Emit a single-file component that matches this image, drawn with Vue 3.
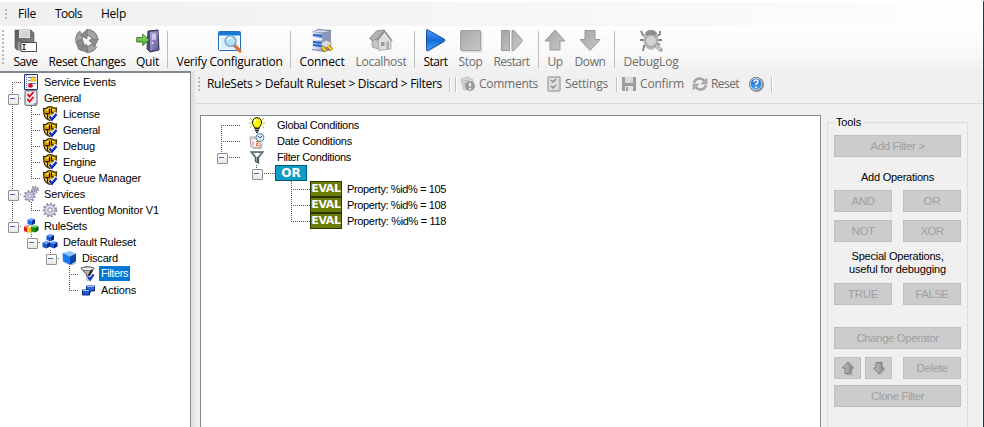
<script setup>
// Spreads a label's letters so that it fills the given width in pixels.
const vFit = {
  mounted(el, { value }) {
    if (!value) return
    const n = el.textContent.length
    const w = el.getBoundingClientRect().width
    el.style.letterSpacing = ((value - w) / n).toFixed(3) + 'px'
  },
}

const shield = '<path d="M1.500 2.500Q4 3 6 1q2-1 4 0 2 1.500 4.500 1l-.5 6.500q-1 4-6 6-5-2-6-6z" fill="#d39c0c" stroke="#33260a" stroke-width="1.100"/><path d="M4 4q2 0 3-1M10 3q1 1 2.500 1M4 9l1 2.500" fill="none" stroke="#ffdc62" stroke-width="1.500"/><path d="M3 7.500h4.500M7.500 3v4.500M9.500 2.500v4l3 1M5.500 8v4" fill="none" stroke="#1d1604" stroke-width="1.100"/><path d="M7.500 10l2.500 3 4.500-6" fill="none" stroke="#fff" stroke-width="4"/><path d="M7.500 10.500l2.500 3 4.500-5.500" fill="none" stroke="#0b2fb8" stroke-width="2.500"/>'
const cube = (x, y, a, b, c) => `<g transform="translate(${x} ${y})"><path d="M0 1.500L3.500 0 7.500 1 4 3z" fill="${a}"/><path d="M0 1.500l4 1.500v4.500L0 6z" fill="${b}"/><path d="M4 3l3.500-2v4.500L4 7.500z" fill="${c}"/></g>`
const teeth = (cx, cy, r, n) => `<circle cx="${cx}" cy="${cy}" r="${r}" fill="none" stroke="#8083a0" stroke-width="2" stroke-dasharray="${(Math.PI * r / n).toFixed(2)}"/><circle cx="${cx}" cy="${cy}" r="${r - 1}" fill="#d4d5e6" stroke="#8588a4" stroke-width=".8"/><circle cx="${cx}" cy="${cy}" r="${r / 3}" fill="#fff" stroke="#777a96" stroke-width=".8"/>`

const icons = {
  save: '<path d="M1 1h16l3 3v17H3l-2-2z" fill="url(#dark)" stroke="#555" stroke-width=".6"/><path d="M5 1h11v8H5z" fill="#e5e5e5"/><path d="M6 3h9M6 5h9M6 7h9" stroke="#c2c2c2"/><path d="M4 13h12v8H4z" fill="#999"/><path d="M7 13.500h15.500v9H7z" fill="#fff" stroke="#4b4b4b"/><path d="M8.500 15.500h3M8.500 20.500h3M10 15.500v5" stroke="#111"/>',
  recycle: '<g fill="none" stroke="#6d6d6d" stroke-width="7"><path d="M3.600 11A8.500 8.500 0 0 1 7 4.600"/><path d="M11.500 3.500a8.500 8.500 0 0 1 8.500 6.500"/><path d="M19 16.500a8.500 8.500 0 0 1-7 4"/></g><g fill="none" stroke="#a3a3a3" stroke-width="5.400"><path d="M3.700 11.500A8.500 8.500 0 0 1 7 4.600"/><path d="M11 3.500a8.500 8.500 0 0 1 9 7"/><path d="M19.500 16a8.500 8.500 0 0 1-8 4.500"/></g><path d="M12 1v9L5.500 6zM23.500 10l-4 7.500-5.500-6.500zM13 23.500l-8-2.500 6.500-6zM.5 12l7-1.500 2 6-5.500 4.500z" fill="#8c8c8c" stroke="#686868" stroke-width=".7"/>',
  quit: '<path d="M12 2l10-1 1 20-9 2-3-3z" fill="#4c4a70" stroke="#39385a"/><path d="M14 3l8-1v18l-8 2z" fill="url(#door)"/><path d="M16 5l4-.500v6l-4 .5z" fill="#c9c8ea"/><circle cx="16.500" cy="14" r="1" fill="#eee"/><path d="M.7 8.500h6V5l6.500 6-6.500 5.500v-3.500h-6z" fill="url(#green)" stroke="#397c22" stroke-width=".9"/>',
  verify: '<rect x=".5" y="2.500" width="22" height="19" rx="1" fill="#f4faff" stroke="#1e6ec0"/><path d="M1 3h21v3.500H1z" fill="#1779d8"/><path d="M3 8.500h17v11H3z" fill="#d9edfa"/><path d="M16 16l6 6" stroke="#d8743a" stroke-width="3.200" stroke-linecap="round"/><circle cx="12.500" cy="12" r="5.300" fill="#b9dff8" stroke="#77a3cc" stroke-width="1.500"/><path d="M9.500 11q1-2.500 4-2.500" stroke="#fff" stroke-width="1.500" fill="none"/>',
  connect: '<path d="M2 3l6-3 13 1v20l-7 2-12-2z" fill="#737f9c"/><path d="M2 3l11 1v18L2 20z" fill="url(#server)"/><path d="M13 4l8-2v18l-8 2z" fill="#8a97b6"/><path d="M3 3l5-2 12 1-7 1.500z" fill="#d6deef"/><path d="M3 6l9 1M3 13l9 1M3 16l9 1" stroke="#1d5ed0" stroke-width="1.800"/><path d="M3 9.500l9 1" stroke="#fff" stroke-width="1.500"/><path d="M11 14l5-3 5 2v4l-5 2-4-2z" fill="#d9d9dc" stroke="#777" stroke-width=".6"/><path d="M12 18l4 4M18 17l4 4" stroke="#8d6900" stroke-width="3.800"/><path d="M12 18l4 4M18 17l4 4" stroke="#ffd22e" stroke-width="2.400"/>',
  house: '<path d="M3 10l4-5 5 5v11l-9-3z" fill="#c4c4c4" stroke="#999" stroke-width=".7"/><path d="M.5 9.500L7.500 2l8-1-7 8.500-5 2z" fill="#b2b2b2" stroke="#8b8b8b"/><path d="M9 11l7-8.500 6 9v8.500l-12 1.500z" fill="#dedede" stroke="#999" stroke-width=".7"/><path d="M8 11.500L15.500 2l7.500 10" fill="none" stroke="#929292" stroke-width="1.500"/><path d="M12 13h3.500v4H12z" fill="#999"/><path d="M17.500 12.500H20V20h-2.500z" fill="#aaa"/>',
  start: '<path d="M4 3l17 9.500L4 23z" fill="#777" opacity=".45"/><path d="M2.500 1.500Q2.500 0 4 1l16 9q2 1 0 2.500l-16 9q-1.500 1-1.500-1z" fill="url(#blue)" stroke="#1553ac"/>',
  stop: '<rect x="2.500" y="2.500" width="21" height="21" rx="1" fill="#ddd"/><rect x="1.500" y="1.500" width="20" height="20" rx="1" fill="url(#grey)" stroke="#a0a0a0"/>',
  restart: '<path d="M1.500 1.500h8v20h-8zM12 1.500h2l8 9v2l-8 9h-2z" fill="url(#grey)" stroke="#999" stroke-linejoin="round"/>',
  up: '<path d="M12 1L22 12h-5v9H7v-9H2z" fill="url(#grey)" stroke="#999" stroke-linejoin="round"/>',
  down: '<path d="M12 21.500L22 10.500h-5v-9H7v9H2z" fill="url(#grey)" stroke="#999" stroke-linejoin="round"/>',
  bug: '<path d="M2 2l2 4 4 2M21 2v3l-4 3M1 11h7M23 11h-6M4 22l1-5 4-3M21 16l-5-3" stroke="#808080" stroke-width="1.800" fill="none"/><ellipse cx="12" cy="11" rx="7.500" ry="10" fill="#b8b8b8"/><path d="M6 5q1-4 6-4t6 4l-3 2H9z" fill="#8a8a8a"/><circle cx="12" cy="12" r="5.800" fill="#d2d2d2" stroke="#aaa" stroke-width="1.600"/><path d="M17 17l5 4" stroke="#aaa" stroke-width="3.600" stroke-linecap="round"/><path d="M17 17l4 3.500" stroke="#d6d6d6" stroke-width="1.500"/>',
  events: '<path d="M1.500.5h13v15h-13z" fill="#f7f7ff" stroke="#27357c"/><path d="M3.500 1v14" stroke="#64709b" stroke-dasharray="1 1"/><path d="M5 3.500h8M5 6.500h8M5 9.500h8M5 12.500h8" stroke="#7183bd"/><path d="M7 7l3-5 3.500 5z" fill="#ffd91a" stroke="#c29600" stroke-width=".5"/><circle cx="7.500" cy="11.500" r="2.300" fill="#d4141c"/><path d="M10 11h4v3h-4z" fill="#fff"/>',
  checks: '<rect x="2" y=".7" width="12" height="14.600" rx="1.200" fill="#e9e9ee" stroke="#77777f" stroke-width="1.200"/><path d="M4.500 4l2 2.500L10.500 2M4.500 9l2 2.500L10.500 7" fill="none" stroke="#d9111d" stroke-width="1.800"/><path d="M11 13h3v2h-3z" fill="#9a9aa2"/>',
  shield,
  gears: teeth(6.5, 10, 5, 9) + teeth(12, 3.500, 3, 7),
  gear: teeth(8, 8, 6.3, 11),
  cubes: cube(4.5, 0, '#72a7ff', '#1767f0', '#092b93') + cube(1, 7, '#ff7771', '#df1818', '#a90e0c') + cube(4, 7.5, '#fff27b', '#f1cf13', '#b28c00') + cube(8, 7, '#66d75f', '#139819', '#065c10'),
  cubesBlue: cube(4.5, 0, '#5c98fb', '#1058e0', '#072480') + cube(.5, 7, '#5c98fb', '#1058e0', '#072480') + cube(8, 7, '#5c98fb', '#1058e0', '#072480'),
  cube: '<path d="M1.500 3L9 1l6 2.500-6 3z" fill="#8bc2ff"/><path d="M1.500 3L9 6.500V15L2 11.500z" fill="#187cf2"/><path d="M9 6.500l6-3v8L9 15z" fill="#0748aa"/><path d="M10 15l5-2" stroke="#aaa"/>',
  filters: '<path d="M1 2q6-2.500 13 0l-4 7v5H7V9z" fill="#b9b9b9" stroke="#333"/><ellipse cx="7.500" cy="2.800" rx="6.500" ry="1.800" fill="#eee" stroke="#555" stroke-width=".7"/><path d="M12 4L9 9v2" stroke="#222" stroke-width="2" fill="none"/><path d="M7.500 11l2.500 2.500 3.500-5" stroke="#fff" stroke-width="4" fill="none"/><path d="M8 11l2 2.500 3.500-5" stroke="#183fc0" stroke-width="2.300" fill="none"/>',
  actions: '<path d="M6.500 4h8v5h-8z" fill="#2868e8" stroke="#0b266c"/><path d="M7 4.500h7" stroke="#a3cfff"/><path d="M2.500 8h7v5h-7z" fill="#1959dd" stroke="#0b266c"/><path d="M3 8.500h6" stroke="#a3cfff"/><path d="M9 11l2-1" stroke="#001a54"/>',
  bulb: '<path d="M1 1l2 2M15 1l-2 2M0 6h2M16 6h-2M1 11l2-2M15 11l-2-2" stroke="#c9ba21"/><path d="M8 .6a4.900 4.900 0 0 0-3 8.600l1 2h4l1-2A4.900 4.900 0 0 0 8 .6z" fill="#fff500" stroke="#151500"/><path d="M5.500 4.500q.5-2 2-2" stroke="#fff" stroke-width="1.300" fill="none"/><path d="M5.500 11.500h5M6 13.500h4M7 15.300h2" stroke="#222" stroke-width="1.300"/>',
  date: '<path d="M1 4h10v11l-9-1z" fill="#fafafa" stroke="#979797"/><path d="M1 4h10v2.500H1z" fill="#c8c8cc"/><path d="M4 8.500v4M7 8.500h2v2H7.500v2H10" stroke="#e45c2c" fill="none"/><path d="M4 15h8l1-4" fill="none" stroke="#b7adad" stroke-width="1.500"/><circle cx="11" cy="4.500" r="4" fill="#d6ebf7" stroke="#667f96"/><path d="M9 3l2 2 2-2" stroke="#344d66" fill="none"/>',
  funnel: '<path d="M2 3h12L9.500 8.500V14l-3-1.500v-4z" fill="#c5d1d2" stroke="#4b6064" stroke-width="1.300"/><path d="M5.500 4l2.500 3.500L10.500 4" fill="#fff"/><path d="M8.500 8v5" stroke="#485e62" stroke-width="1.500"/>',
  comments: '<path d="M1 3l7-2 5 3-1 8-8 2z" fill="#dcdcdc" stroke="#b8b8b8"/><path d="M3 5l6-1M4 7.500l5-1M4 10l4-1" stroke="#aaa"/><circle cx="10" cy="10" r="5" fill="#999"/><path d="M10 7v3.500M10 12v1.500" stroke="#fff" stroke-width="1.800"/>',
  settings: '<rect x="2" y="1" width="12" height="14" rx="1" fill="#dedede" stroke="#a8a8a8" stroke-width="1.500"/><path d="M5 4l2 2 3-3M5 10l2 2 3-3" stroke="#888" fill="none" stroke-width="1.300"/>',
  disk: '<path d="M1 1h14v14H2l-1-1z" fill="#9c9c9c"/><path d="M4 1h8v6H4z" fill="#dadada"/><path d="M4 10h8v5H4z" fill="#e5e5e5"/><path d="M5 11h2v4H5z" fill="#999"/>',
  refresh: '<g fill="none" stroke="#a5a5a5" stroke-width="2.600"><path d="M2 7q1-4.500 6-4.500 2.500 0 4.500 2.500"/><path d="M14 9q-1 4.500-6 4.500-2.500 0-4.500-2.500"/></g><path d="M15 2v6H9zM1 14V8h6z" fill="#b0b0b0" stroke="#9b9b9b" stroke-width=".6"/>',
  help: '<circle cx="8.500" cy="8.500" r="7.300" fill="#777"/><circle cx="8" cy="8" r="6.700" fill="#dde4ef" stroke="#888"/><circle cx="8" cy="8" r="5.500" fill="url(#ball)"/><path d="M6 6q0-2 2-2t2 1.700q0 1-2 2.300v1M8 10.500v1.500" fill="none" stroke="#fff" stroke-width="1.500"/>',
  smallUp: '<path d="M13.500 9h-2v6H6.500" stroke="#b5b5b5" stroke-width="1.500" fill="none"/><path d="M8 2l5.500 6h-2.500v5.500H5V8H2.500z" fill="url(#steel)" stroke="#7d7d7d"/>',
  smallDown: '<path d="M14 9l-5 6" stroke="#b5b5b5" stroke-width="1.500" fill="none"/><path d="M8 14l5.500-6h-2.500V2.500H5V8H2.500z" fill="url(#steel)" stroke="#7d7d7d"/>',
}

const menu = [['File', 18], ['Tools', 27], ['Help', 25]]

// label, icon, button width, label width, enabled
const groups = [
  [['Save', 'save', 35, 24, 1], ['Reset Changes', 'recycle', 88, 77, 1], ['Quit', 'quit', 33, 23, 1]],
  [['Verify Configuration', 'verify', 117, 106, 1]],
  [['Connect', 'connect', 56, 45, 1], ['Localhost', 'house', 62, 51, 0]],
  [['Start', 'start', 35, 24, 1], ['Stop', 'stop', 35, 24, 0], ['Restart', 'restart', 47, 36, 0]],
  [['Up', 'up', 26, 15, 0], ['Down', 'down', 44, 31, 0]],
  [['DebugLog', 'bug', 66, 55, 0]],
]

// guides: b blank, v line through, t branch, e last branch, f first branch, m expander box
const nav = [
  [['f'], 'events', 'Service Events', 72],
  [['t m'], 'checks', 'General', 37],
  [['v', 't'], 'shield', 'License', 37],
  [['v', 't'], 'shield', 'General', 37],
  [['v', 't'], 'shield', 'Debug', 32],
  [['v', 't'], 'shield', 'Engine', 33],
  [['v', 'e'], 'shield', 'Queue Manager', 78],
  [['t m'], 'gears', 'Services', 41],
  [['v', 'e'], 'gear', 'Eventlog Monitor V1', 96],
  [['e m'], 'cubes', 'RuleSets', 43],
  [['b', 'e m'], 'cubesBlue', 'Default Ruleset', 73],
  [['b', 'b', 'e m'], 'cube', 'Discard', 36],
  [['b', 'b', 'b', 't'], 'filters', 'Filters', 27, true],
  [['b', 'b', 'b', 'e'], 'actions', 'Actions', 35],
]

const rules = [
  [['f'], 'bulb', 'Global Conditions', 82],
  [['t'], 'date', 'Date Conditions', 75],
  [['e m'], 'funnel', 'Filter Conditions', 74],
  [['b', 'e m'], 'OR', '', 0],
  [['b', 'b', 't'], 'EVAL', 'Property: %id% = 105', 99],
  [['b', 'b', 't'], 'EVAL', 'Property: %id% = 108', 99],
  [['b', 'b', 'e'], 'EVAL', 'Property: %id% = 118', 99],
]
</script>

<template>
  <div class="window">
    <svg class="defs" width="0" height="0">
      <linearGradient id="grey" x2="1" y2="1"><stop stop-color="#a6a6a6" /><stop offset="1" stop-color="#c8c8c8" /></linearGradient>
      <linearGradient id="steel" x2="1"><stop stop-color="#c4c4c4" /><stop offset="1" stop-color="#858585" /></linearGradient>
      <linearGradient id="dark" x2="1" y2="1"><stop stop-color="#595959" /><stop offset="1" stop-color="#8b8b8b" /></linearGradient>
      <linearGradient id="blue" x2="0" y2="1"><stop stop-color="#529bf0" /><stop offset=".5" stop-color="#176bd8" /><stop offset="1" stop-color="#3aa4fa" /></linearGradient>
      <linearGradient id="green" x2="0" y2="1"><stop stop-color="#a4e57a" /><stop offset="1" stop-color="#3f9f27" /></linearGradient>
      <linearGradient id="door" x2="1" y2="1"><stop stop-color="#aaa8da" /><stop offset="1" stop-color="#62609a" /></linearGradient>
      <linearGradient id="server" x2="1"><stop stop-color="#eef2fa" /><stop offset="1" stop-color="#8fa2cc" /></linearGradient>
      <linearGradient id="ball" x2="0" y2="1"><stop stop-color="#2560ba" /><stop offset="1" stop-color="#4ba4f4" /></linearGradient>
    </svg>

    <nav class="menubar">
      <i class="grip"></i>
      <span v-for="m in menu" :key="m[0]" class="menu-item"><span v-fit="m[1]">{{ m[0] }}</span></span>
    </nav>

    <div class="toolbar">
      <i class="grip tall"></i>
      <div v-for="(g, i) in groups" :key="i" class="group">
        <button v-for="b in g" :key="b[0]" class="tool" :class="{ off: !b[4] }" :style="{ width: b[2] + 'px' }">
          <svg width="24" height="24" viewBox="0 0 24 24" v-html="icons[b[1]]"></svg>
          <span v-fit="b[3]">{{ b[0] }}</span>
        </button>
      </div>
    </div>

    <div class="body">
      <aside class="tree nav">
        <div v-for="(r, i) in nav" :key="i" class="row">
          <i v-for="(c, j) in r[0]" :key="j" class="cell" :class="c"></i>
          <svg width="16" height="16" viewBox="0 0 16 16" v-html="icons[r[1]]"></svg>
          <span class="label" :class="{ selected: r[4] }"><span v-fit="r[3]">{{ r[2] }}</span></span>
        </div>
      </aside>
      <div class="splitter"></div>

      <main class="main">
        <div class="crumbbar">
          <i class="grip"></i>
          <span class="crumb"><span v-fit="235">RuleSets &gt; Default Ruleset &gt; Discard &gt; Filters</span></span>
          <i class="sep first"></i><i class="sep second"></i>
          <span class="action comments"><svg width="16" height="16" viewBox="0 0 16 16" v-html="icons.comments"></svg><span v-fit="59">Comments</span></span>
          <span class="action settings"><svg width="16" height="16" viewBox="0 0 16 16" v-html="icons.settings"></svg><span v-fit="43">Settings</span></span>
          <i class="sep third"></i>
          <span class="action confirm"><svg width="16" height="16" viewBox="0 0 16 16" v-html="icons.disk"></svg><span v-fit="44">Confirm</span></span>
          <span class="action reset"><svg width="16" height="16" viewBox="0 0 16 16" v-html="icons.refresh"></svg><span v-fit="28">Reset</span></span>
          <svg class="help" width="16" height="16" viewBox="0 0 16 16" v-html="icons.help"></svg>
          <i class="sep last"></i>
        </div>

        <div class="content">
          <section class="tree rules">
            <div v-for="(r, i) in rules" :key="i" class="row">
              <i v-for="(c, j) in r[0]" :key="j" class="cell" :class="c"></i>
              <span v-if="r[1] === 'OR' || r[1] === 'EVAL'" class="badge" :class="r[1].toLowerCase()">{{ r[1] }}</span>
              <span v-else class="iconbox"><svg width="16" height="16" viewBox="0 0 16 16" v-html="icons[r[1]]"></svg></span>
              <span v-if="r[2]" class="label"><span v-fit="r[3]">{{ r[2] }}</span></span>
            </div>
          </section>

          <fieldset class="tools">
            <legend><span v-fit="25">Tools</span></legend>
            <button class="wide"><span v-fit="54">Add Filter &gt;</span></button>
            <p class="ops"><span v-fit="73">Add Operations</span></p>
            <button><span v-fit="23">AND</span></button><button><span v-fit="17">OR</span></button>
            <button class="gap8"><span v-fit="23">NOT</span></button><button class="gap8"><span v-fit="23">XOR</span></button>
            <p class="special"><span v-fit="92">Special Operations,</span><br /><span v-fit="97">useful for debugging</span></p>
            <button><span v-fit="30">TRUE</span></button><button><span v-fit="33">FALSE</span></button>
            <button class="wide change"><span v-fit="82">Change Operator</span></button>
            <div class="arrows gap8">
              <button><svg width="16" height="16" viewBox="0 0 16 16" v-html="icons.smallUp"></svg></button>
              <button><svg width="16" height="16" viewBox="0 0 16 16" v-html="icons.smallDown"></svg></button>
            </div>
            <button class="gap8"><span v-fit="31">Delete</span></button>
            <button class="wide clone"><span v-fit="53">Clone Filter</span></button>
          </fieldset>
        </div>
      </main>
    </div>
  </div>
</template>

<style>
html, body { overflow: hidden; }
</style>

<style scoped>
* { box-sizing: border-box; }
.window {
  width: 984px; height: 427px; overflow: hidden; display: flex; flex-direction: column;
  border-top: 2px solid #fff; border-right: 1px solid #26383f; background: #f0f0f0;
  font: 12px/16px "Open Sans", "Noto Sans", sans-serif; color: #000; white-space: nowrap;
}
.defs { position: absolute; }
svg { display: block; flex: none; overflow: visible; }
button { font: inherit; padding: 0; border: 0; background: none; }
.menubar {
  height: 24px; flex: none; display: flex; align-items: center; padding-left: 5px;
  background: linear-gradient(90deg, #f0f0f0, #f4f4f4 35%, #fcfcfc 90%, #fff);
}
.grip {
  width: 2px; height: 11px; flex: none;
  background: repeating-linear-gradient(#b8b8b8 0 2px, transparent 2px 4px);
}
.grip.tall { height: 35px; margin: 4px 0 0 -3px; }
.menu-item { margin-left: 11px; }
.menu-item + .menu-item { margin-left: 19px; }
.toolbar {
  height: 45px; flex: none; display: flex; padding-left: 5px;
  background: linear-gradient(#fefefe, #f8f8f8 65%, #f0f0f0);
}
.group { display: flex; padding: 3px 0 0 4px; }
.group + .group::before { content: ""; width: 1px; height: 37px; margin: 2px 3px 0 0; background: #bdbdbd; }
.group + .group { padding-left: 2px; }
.group:nth-of-type(2), .group:nth-of-type(5) { margin-left: 1px; }
.tool { display: flex; flex-direction: column; align-items: center; height: 41px; color: #000; }
.tool span { line-height: 17px; }
.off, .action { color: #6d6d6d; }
.body { flex: 1; display: flex; min-height: 0; }
.tree { background: #fff; font: 11px/16px "Liberation Sans", Arial, sans-serif; }
.nav { width: 191px; border: 1px solid #828790; border-width: 2px 1px 0 0; padding: 1px 0 0 3px; }
.row { display: flex; height: 16px; }
.cell { position: relative; flex: none; width: 19px; height: 16px; }
.cell.v, .cell.t, .cell.e, .cell.f {
  --h: repeating-linear-gradient(90deg, #555 0 1px, transparent 1px 2px);
  --v: repeating-linear-gradient(#555 0 1px, transparent 1px 2px);
  background: var(--v) 9px 0 / 1px 100% no-repeat, var(--h) 9px 8px / 11px 1px no-repeat;
}
.cell.v { background: var(--v) 9px 0 / 1px 100% no-repeat; }
.cell.e { background: var(--v) 9px 0 / 1px 8px no-repeat, var(--h) 9px 8px / 11px 1px no-repeat; }
.cell.f { background: var(--v) 9px 8px / 1px 8px no-repeat, var(--h) 9px 8px / 11px 1px no-repeat; }
.cell.m::before {
  content: ""; position: absolute; left: 5px; top: 4px; width: 9px; height: 9px;
  border: 1px solid #919191; border-radius: 1px;
  background: linear-gradient(#4b63a7, #4b63a7) 1px 3px / 5px 1px no-repeat, linear-gradient(#fff, #e6e6e6);
}
.nav svg { margin-left: 1px; }
.nav .label { margin-left: 3px; padding: 0 2px; }
.label.selected { background: #0078d7; color: #fff; height: 15px; line-height: 15px; }
.splitter { width: 4px; background: #e3e3e3; }
.main { flex: 1; display: flex; flex-direction: column; min-width: 0; }
.crumbbar { height: 33px; flex: none; display: flex; align-items: flex-start; padding: 5px 0 0 3px; border-bottom: 1px solid #dadada; }
.crumbbar .grip { height: 15px; margin-top: 1px; }
.crumb { width: 246px; padding-left: 7px; }
.sep { width: 1px; height: 15px; margin-top: 1px; background: #c2c2c2; box-shadow: 1px 0 #fff; }
.sep.first { margin-left: 3px; }
.sep.second { margin-left: 5px; }
.action { display: flex; gap: 3px; }
.comments { margin-left: 4px; width: 86px; }
.settings { width: 70px; }
.confirm { margin-left: 4px; width: 71px; }
.reset { width: 56px; }
.sep.last { margin-left: 7px; }
.content { flex: 1; display: flex; min-height: 0; padding: 11px 15px 0 5px; }
.rules { width: 621px; border: 1px solid #828790; border-bottom: 0; padding: 1px 0 0 4px; }
.rules .cell { width: 35px; }
.rules .cell.t { background: var(--v) 16px 0 / 1px 100% no-repeat, var(--h) 16px 8px / 19px 1px no-repeat; }
.rules .cell.e { background: var(--v) 16px 0 / 1px 8px no-repeat, var(--h) 16px 8px / 19px 1px no-repeat; }
.rules .cell.f { background: var(--v) 16px 8px / 1px 8px no-repeat, var(--h) 16px 8px / 19px 1px no-repeat; }
.rules .cell.m::before { left: 12px; }
.iconbox { width: 34px; display: flex; justify-content: center; }
.rules .label { margin-left: 3px; }
.badge + .label { margin-left: 5px; }
.badge {
  width: 32px; height: 16px; text-align: center; color: #fff; border: 1px solid #005b78;
  font: bold 12px/14px "DejaVu Sans", Verdana, sans-serif; background: #0d9cc4;
}
.badge.eval { background: #6c7c08; border-color: #2d3500; font-size: 11px; letter-spacing: -.3px; }
.tools {
  width: 141px; height: 330px; margin: 0 0 0 6px; padding: 6px 6px 0; border: 1px solid #dcdcdc;
  font: 11px/13px "Liberation Sans", Arial, sans-serif;
  display: grid; grid-template-columns: 58px 58px; column-gap: 11px; align-content: start;
}
.tools legend { padding: 0 2px; margin-left: 0; line-height: 14px; }
.tools p { grid-column: 1 / 3; margin: 0; text-align: center; }
.tools button {
  height: 22px; border: 1px solid #bfbfbf; background: #ccc; color: #a0a0a0;
  display: flex; align-items: center; justify-content: center; font-size: 11.5px;
}
.tools .wide { grid-column: 1 / 3; }
.tools .ops { height: 33px; padding-top: 14px; }
.tools .gap8 { margin-top: 8px; }
.tools .special { height: 41px; padding-top: 8px; }
.tools .change { margin-top: 22px; }
.tools .clone { margin-top: 6px; }
.arrows { display: flex; gap: 4px; }
.arrows button { width: 27px; }
</style>
